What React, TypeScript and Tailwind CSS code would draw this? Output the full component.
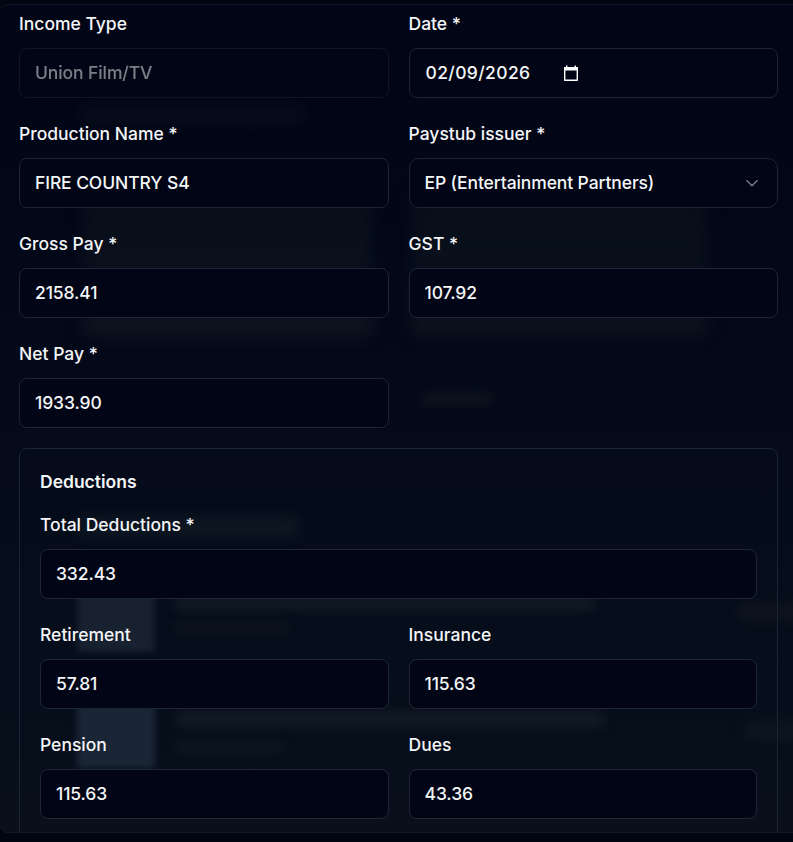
import React from 'react';
import clsx from 'clsx';

type FieldProps = {
  label: string;
  value: string;
  disabled?: boolean;
  className?: string;
};

const labelStyle = 'block h-8 mb-2 leading-8 font-medium whitespace-nowrap';
const controlStyle = 'w-full h-[50px] border border-[#1d2635] bg-[#010515] px-[15px] outline-none';

const Field: React.FC<FieldProps> = ({ label, value, disabled, className }) => (
  <div className={className}>
    <label className={labelStyle}>{label}</label>
    <input
      type="text"
      defaultValue={value}
      disabled={disabled}
      className={clsx(
        controlStyle,
        'block rounded-[8px] pb-[2px] font-medium tracking-[-0.1px]',
        disabled && 'opacity-50'
      )}
    />
  </div>
);

const DateField: React.FC = () => (
  <div>
    <label className={labelStyle}>Date *</label>
    <div className={clsx(controlStyle, 'flex items-center rounded-[8px] font-medium')}>
      <span className="w-[138px] pl-px tracking-[0.37px]">02/09/2026</span>
      <svg width="16" height="17" viewBox="0 0 16 17" fill="none" className="text-white">
        <path d="M3 0.5h1.5v2H3zM11.5 0.5H13v2h-1.5zM1 2h14v3.5H1z" fill="currentColor" />
        <path d="M1.7 5v10.3h12.6V5" stroke="currentColor" strokeWidth="1.4" strokeLinejoin="round" />
      </svg>
    </div>
  </div>
);

const IssuerField: React.FC = () => (
  <div>
    <label className={labelStyle}>Paystub issuer *</label>
    <button
      type="button"
      className={clsx(controlStyle, 'flex items-center justify-between rounded-[10px] font-medium')}
    >
      <span className="tracking-[-0.11px]">EP (Entertainment Partners)</span>
      <svg width="20" height="20" viewBox="0 0 20 20" fill="none" className="text-[#7d818b]">
        <path d="M4.5 7.3 10 12.8l5.5-5.5" stroke="currentColor" strokeWidth="1.3" />
      </svg>
    </button>
  </div>
);

// Page content showing faintly through the overlay
const Backdrop: React.FC = () => (
  <div className="absolute inset-0 overflow-hidden bg-linear-to-b from-[#010515] via-[#040a19] to-[#09101c]">
    <div className="absolute left-[78px] top-[99px] h-[22px] w-[230px] rounded-full bg-[#070d1a] opacity-70 blur-[4px]" />
    <div className="absolute left-[84px] top-[190px] h-[142px] w-[290px] rounded-lg bg-linear-to-b from-[#070e1a] to-[#0d131f] blur-[7px]" />
    <div className="absolute left-[412px] top-[190px] h-[142px] w-[296px] rounded-lg bg-linear-to-b from-[#070e1a] to-[#0b121d] blur-[7px]" />
    <div className="absolute left-[422px] top-[386px] h-4 w-[72px] rounded-full bg-[#0a111c] blur-[3px]" />
    <div className="absolute left-[76px] top-[510px] h-[23px] w-[226px] rounded-full bg-[#0d1521] blur-[5px]" />
    <div className="absolute left-[78px] top-[585px] h-[62px] w-[78px] bg-[#172130] blur-[3px]" />
    <div className="absolute left-[174px] top-[589px] h-[18px] w-[424px] rounded-full bg-[#101824] blur-[4px]" />
    <div className="absolute left-[174px] top-[613px] h-[18px] w-[118px] rounded-full bg-[#0b121e] blur-[4px]" />
    <div className="absolute left-[735px] top-[595px] h-[24px] w-[70px] rounded-full bg-[#0b121e] blur-[4px]" />
    <div className="absolute left-[78px] top-[699px] h-[64px] w-[78px] bg-[#1a2535] blur-[3px]" />
    <div className="absolute left-[176px] top-[705px] h-[18px] w-[430px] rounded-full bg-[#111924] blur-[4px]" />
    <div className="absolute left-[176px] top-[734px] h-[15px] w-[110px] rounded-full bg-[#0c141f] blur-[4px]" />
    <div className="absolute left-[745px] top-[715px] h-[22px] w-[60px] rounded-full bg-[#0c141f] blur-[4px]" />
  </div>
);

export default function App() {
  return (
    <div className="h-[842px] overflow-hidden bg-[#010411] pt-1 font-['Inter',sans-serif] text-[17.5px] text-[#f4f5f7]">
      <div className="relative -ml-[2px] -mr-4 h-[829px] overflow-hidden rounded-[10px] border border-[#111a28]">
        <Backdrop />
        <div className="relative ml-5 w-[759px] pt-[3px]">
          <div className="grid grid-cols-2 gap-5">
            <Field label="Income Type" value="Union Film/TV" disabled />
            <DateField />
            <Field label="Production Name *" value="FIRE COUNTRY S4" />
            <IssuerField />
            <Field label="Gross Pay *" value="2158.41" />
            <Field label="GST *" value="107.92" />
            <Field label="Net Pay *" value="1933.90" />
          </div>

          <div className="mt-5 h-[420px] rounded-[8px] border border-[#1b2533] px-5 pt-5">
            <h3 className="mb-[14px] h-[26px] leading-[26px] font-semibold">Deductions</h3>
            <div className="grid grid-cols-2 gap-5">
              <Field label="Total Deductions *" value="332.43" className="col-span-2" />
              <Field label="Retirement" value="57.81" />
              <Field label="Insurance" value="115.63" />
              <Field label="Pension" value="115.63" />
              <Field label="Dues" value="43.36" />
            </div>
          </div>
        </div>
      </div>
    </div>
  );
}
